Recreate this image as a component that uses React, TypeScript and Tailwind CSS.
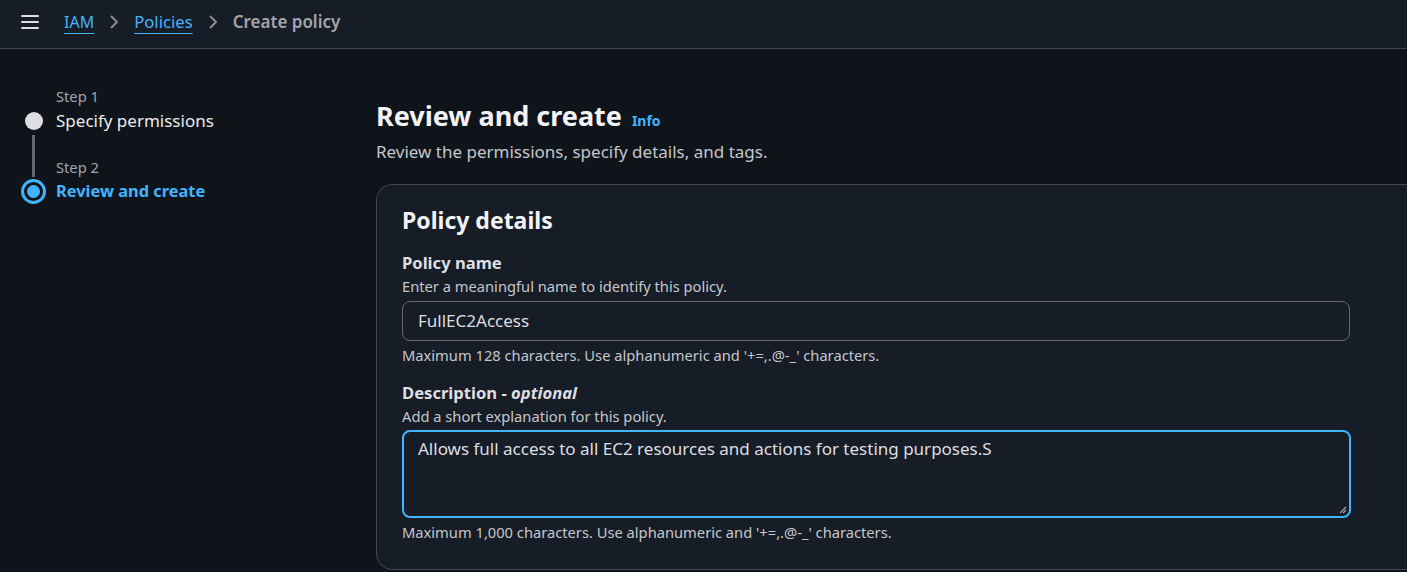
import React from "react";

function Chevron() {
  return (
    <svg className="mx-[14px]" width="12" height="16" viewBox="0 0 12 16">
      <path d="M3 2 L9 8 L3 14" fill="none" stroke="#8c8c94" strokeWidth="2" />
    </svg>
  );
}

export default function App() {
  const font = { fontFamily: '"Noto Sans", "Open Sans", sans-serif' };
  return (
    <div
      className="w-[1407px] h-[572px] overflow-hidden bg-[#0f141a] text-[#dedee3]"
      style={font}
    >
      {/* Breadcrumb bar */}
      <div className="h-[49px] bg-[#161d26] border-b border-[#424650] flex items-center pb-[5px]">
        <button className="ml-[21px] w-[18px] h-[14px] flex flex-col justify-between" aria-label="menu">
          <span className="block h-[2px] w-full bg-[#dedee3] rounded" />
          <span className="block h-[2px] w-full bg-[#dedee3] rounded" />
          <span className="block h-[2px] w-full bg-[#dedee3] rounded" />
        </button>
        <nav className="ml-[25px] flex items-center text-[17px] leading-[24px]">
          <a className="text-[#42b4ff] underline underline-offset-[5px] decoration-[1px] text-[16px]">IAM</a>
          <Chevron />
          <a className="text-[#42b4ff] underline underline-offset-[5px] decoration-[1px] text-[16.7px]">Policies</a>
          <Chevron />
          <span className="text-[#a4a4ad] font-semibold">Create policy</span>
        </nav>
      </div>

      <div className="flex">
        {/* Stepper */}
        <div className="w-[376px] shrink-0 pl-[21px] pt-[36px] flex">
          <div className="w-[25px] flex flex-col items-center">
            <div className="h-[22px]" />
            <div className="h-[27px] flex items-center justify-center">
              <div className="w-[18px] h-[18px] rounded-full bg-[#dedee3]" />
            </div>
            <div className="h-[44px] flex justify-center pt-[1px] pb-[1px]">
              <div className="w-[3px] h-full bg-[#656871]" />
            </div>
            <div className="h-[26px] flex items-center justify-center">
              <div className="w-[25px] h-[25px] shrink-0 rounded-full border-[3px] border-[#42b4ff] flex items-center justify-center">
                <div className="w-[13px] h-[13px] rounded-full bg-[#42b4ff]" />
              </div>
            </div>
          </div>
          <div className="ml-[10px]">
            <div className="text-[14.7px] leading-[22px] text-[#a4a4ad]">Step 1</div>
            <div className="text-[17px] leading-[27px] text-[#ebebf0]">Specify permissions</div>
            <div className="mt-[22px] text-[14.7px] leading-[22px] text-[#a4a4ad]">Step 2</div>
            <div className="text-[16.4px] leading-[26px] text-[#42b4ff] font-bold">Review and create</div>
          </div>
        </div>

        {/* Main */}
        <div className="flex-1 pt-[49px]">
          <div className="flex items-baseline">
            <h1 className="text-[27px] leading-[36px] font-bold text-[#f3f3f7]">Review and create</h1>
            <a className="ml-[10px] text-[14px] font-bold text-[#42b4ff]">Info</a>
          </div>
          <p className="text-[17px] leading-[24px] text-[#c6c6cd] mt-[6px]">
            Review the permissions, specify details, and tags.
          </p>

          <div className="mt-[20px] w-[1100px] rounded-[16px] border border-[#424650] bg-[#161d26] pl-[25px] pt-[19px] pb-[27px]">
            <h2 className="text-[23px] leading-[32px] font-bold text-[#f3f3f7]">Policy details</h2>

            <div className="mt-[15px]">
              <div className="text-[16.6px] leading-[24px] font-bold text-[#dedee3]">Policy name</div>
              <div className="text-[14.7px] leading-[22px] text-[#c6c6cd]">Enter a meaningful name to identify this policy.</div>
              <div className="mt-[4px] w-[948px] h-[40px] rounded-[8px] border border-[#656871] flex items-center px-[15px] text-[17px] text-[#dedee3]">
                FullEC2Access
              </div>
              <div className="mt-[4px] text-[14.7px] leading-[20px] text-[#c6c6cd]">
                Maximum 128 characters. Use alphanumeric and '+=,.@-_' characters.
              </div>
            </div>

            <div className="mt-[16px]">
              <div className="text-[16.6px] leading-[24px] font-bold text-[#dedee3]">
                Description - <i className="italic">optional</i>
              </div>
              <div className="text-[14.7px] leading-[22px] text-[#c6c6cd]">Add a short explanation for this policy.</div>
              <div className="relative mt-[3px] w-[949px] h-[88px] rounded-[8px] border-2 border-[#42b4ff] px-[14px] pt-[5px] text-[17px] leading-[24px] text-[#dedee3]">
                Allows full access to all EC2 resources and actions for testing purposes.S
                <svg className="absolute right-[2px] bottom-[2px]" width="8" height="8" viewBox="0 0 8 8">
                  <path d="M7 1 L1 7 M7 4 L4 7" stroke="#a4a4ad" strokeWidth="1.2" />
                </svg>
              </div>
              <div className="mt-[4px] text-[14.7px] leading-[20px] text-[#c6c6cd]">
                Maximum 1,000 characters. Use alphanumeric and '+=,.@-_' characters.
              </div>
            </div>
          </div>
        </div>
      </div>
    </div>
  );
}
